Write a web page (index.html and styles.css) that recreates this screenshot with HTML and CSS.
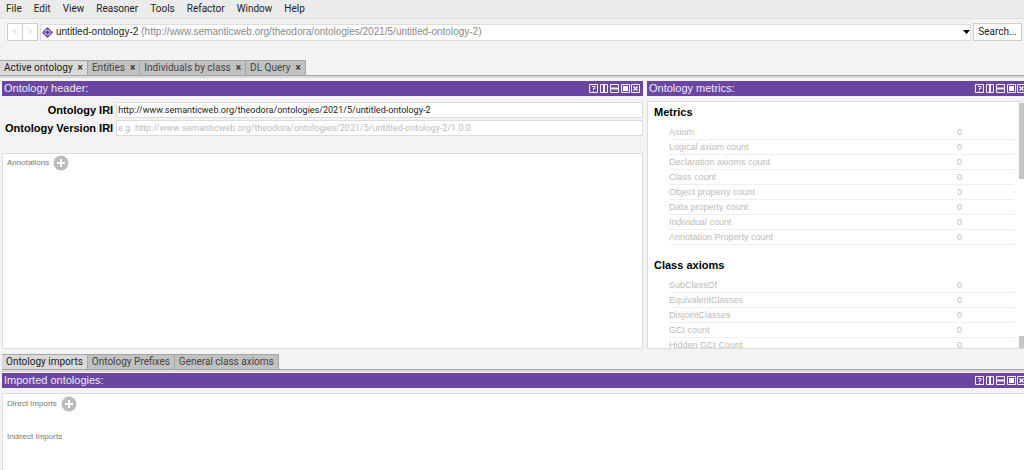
FILE: index.html
```html
<!DOCTYPE html>
<html lang="en">
<head>
<meta charset="utf-8">
<title>untitled-ontology-2</title>
<link rel="stylesheet" href="styles.css">
</head>
<body>
<svg class="defs" aria-hidden="true">
  <symbol id="window-controls" viewBox="0 0 51 9">
    <g fill="none" stroke="#f4effb" stroke-width="1">
      <path d="M.5 .5h8v8h-8zM11.500 .5h7v8h-7zM21.500 .5h8v8h-8zM32.500 .5h8v8h-8zM42.500 .5h8v8h-8z"/>
      <path d="M3 2.500h3v2h-1.500v1.500M4.500 7v1"/>
      <path d="M44.500 2.500l4 4M48.500 2.500l-4 4" stroke-width="1.500"/>
      <path d="M15 1v7M21 4.500h9" stroke-width="2"/>
    </g>
    <path fill="#fff" d="M34 2h5v5h-5z"/>
  </symbol>
  <symbol id="add" viewBox="0 0 16 16">
    <circle cx="8" cy="8" r="7.500" fill="#bcbcbc"/>
    <path d="M8 4v8M4 8h8" stroke="#fff" stroke-width="2"/>
  </symbol>
</svg>

<nav class="menu">
  <button>File</button><button>Edit</button><button>View</button><button>Reasoner</button><button>Tools</button><button>Refactor</button><button>Window</button><button>Help</button>
</nav>

<div class="toolbar">
  <div class="history"><button disabled aria-label="Back">&lt;</button><button disabled aria-label="Forward">&gt;</button></div>
  <button class="ontology-picker" aria-haspopup="listbox">
    <svg class="ontology-icon" viewBox="0 0 11 11"><path d="M5.500 0l5.500 5.500-5.500 5.500-5.500-5.500z" fill="#7150ad"/><circle cx="5.500" cy="5.500" r="3.500" fill="#7150ad"/><circle cx="5.500" cy="5.500" r="2.300" fill="#5b3a94" stroke="#e4daf4" stroke-width="1"/></svg>
    <span class="name">untitled-ontology-2</span>
    <span class="iri">(http://www.semanticweb.org/theodora/ontologies/2021/5/untitled-ontology-2)</span>
    <svg class="arrow" viewBox="0 0 7 4"><path d="M0 0h7l-3.500 4z"/></svg>
  </button>
  <button class="search">Search...</button>
</div>

<div class="tabs main-tabs">
  <button class="tab active">Active ontology<span class="close">×</span></button>
  <button class="tab">Entities<span class="close">×</span></button>
  <button class="tab">Individuals by class<span class="close">×</span></button>
  <button class="tab">DL Query<span class="close">×</span></button>
</div>

<main class="workspace">
  <section class="view">
    <header class="view-header"><h2>Ontology header:</h2><svg class="controls"><use href="#window-controls"/></svg></header>
    <form class="iri-form">
      <label for="iri">Ontology IRI</label>
      <input id="iri" value="http://www.semanticweb.org/theodora/ontologies/2021/5/untitled-ontology-2">
      <label for="version">Ontology Version IRI</label>
      <input id="version" placeholder="e.g. http://www.semanticweb.org/theodora/ontologies/2021/5/untitled-ontology-2/1.0.0">
    </form>
    <div class="box annotations">
      <div class="add-row">Annotations<button class="add" aria-label="Add annotation"><svg><use href="#add"/></svg></button></div>
    </div>
  </section>

  <section class="view metrics-view">
    <header class="view-header edge"><h2>Ontology metrics:</h2><svg class="controls"><use href="#window-controls"/></svg></header>
    <div class="box metrics">
      <div class="metrics-list">
        <h3>Metrics</h3>
        <table>
          <tr><td>Axiom</td><td>0</td></tr>
          <tr><td>Logical axiom count</td><td>0</td></tr>
          <tr><td>Declaration axioms count</td><td>0</td></tr>
          <tr><td>Class count</td><td>0</td></tr>
          <tr><td>Object property count</td><td>0</td></tr>
          <tr><td>Data property count</td><td>0</td></tr>
          <tr><td>Individual count</td><td>0</td></tr>
          <tr><td>Annotation Property count</td><td>0</td></tr>
        </table>
        <h3>Class axioms</h3>
        <table>
          <tr><td>SubClassOf</td><td>0</td></tr>
          <tr><td>EquivalentClasses</td><td>0</td></tr>
          <tr><td>DisjointClasses</td><td>0</td></tr>
          <tr><td>GCI count</td><td>0</td></tr>
          <tr><td>Hidden GCI Count</td><td>0</td></tr>
        </table>
      </div>
      <div class="scrollbar"><div class="thumb"></div><div class="step"></div></div>
    </div>
  </section>
</main>

<section class="lower">
  <div class="tabs">
    <button class="tab active">Ontology imports</button>
    <button class="tab">Ontology Prefixes</button>
    <button class="tab">General class axioms</button>
  </div>
  <header class="view-header edge"><h2>Imported ontologies:</h2><svg class="controls"><use href="#window-controls"/></svg></header>
  <div class="box imports">
    <div class="add-row">Direct Imports<button class="add" aria-label="Add direct import"><svg><use href="#add"/></svg></button></div>
    <div class="add-row">Indirect Imports</div>
  </div>
</section>
</body>
</html>
```

FILE: styles.css
```css
* { box-sizing: border-box; }
body {
  margin: 0;
  height: 100vh;
  display: flex;
  flex-direction: column;
  overflow: hidden;
  background: #f3f3f3;
  color: #222;
  font: 10px/14px Roboto, sans-serif;
}
button, input { font: inherit; color: inherit; margin: 0; padding: 0; border: 0; background: none; }
h2, h3 { margin: 0; font-weight: 400; }
.defs { display: none; }

.menu {
  display: flex;
  gap: 12px;
  padding: 2px 6px;
  background: #ebebeb;
  border-bottom: 1px solid #e0e0e0;
}

.toolbar { display: flex; align-items: center; gap: 2px; padding: 4px 2px 19px 7px; }
.history { display: flex; }
.history button { width: 16px; height: 18px; background: #fff; border: 1px solid #ccc; color: #ddd; }
.history button + button { margin-left: -1px; }
.ontology-picker {
  flex: 1;
  min-width: 0;
  height: 17px;
  display: flex;
  align-items: center;
  gap: 3px;
  padding: 0 0 0 1px;
  background: #fff;
  border: 1px solid #ddd;
  white-space: nowrap;
  font-family: "Liberation Sans", sans-serif;
}
.ontology-icon { width: 11px; height: 11px; }
.iri { color: #888; }
.arrow { width: 7px; height: 4px; margin-left: auto; }
.search { height: 18px; padding: 0 4px; background: #fff; border: 1px solid #ccc; }

.tabs { display: flex; border-bottom: 1px solid #a5a5a5; box-shadow: 0 2px #dadada; }
.tab {
  height: 15px;
  padding: 0 4px;
  background: #c1c1c1;
  border: 1px solid #a5a5a5;
  border-width: 1px 1px 0 0;
  color: #444;
  line-height: 14px;
}
.tab.active { background: #d9d9d9; color: #222; }
.close { margin-left: 5px; font-weight: 700; color: #333; }

.workspace {
  flex: 1;
  min-height: 0;
  display: grid;
  grid-template-columns: 641fr 380fr;
  gap: 4px;
  padding: 5px 0 5px 2px;
  margin-right: -3px;
}
.view { display: flex; flex-direction: column; min-width: 0; min-height: 0; }
.view-header {
  display: flex;
  align-items: center;
  justify-content: space-between;
  height: 15px;
  padding: 0 3px 0 2px;
  background: #6b46a0;
  color: #f0eaf8;
}
.view-header.edge { padding-right: 1px; }
.view-header h2 { font: 11px/15px "Liberation Sans", sans-serif; }
.controls { width: 51px; height: 9px; }
.box { background: #fff; border: 1px solid #dcdcdc; }

.iri-form {
  display: grid;
  grid-template-columns: auto 1fr;
  gap: 2px 3px;
  padding: 6px 0 17px 3px;
}
.iri-form label { font: bold 11px/16px "Liberation Sans", sans-serif; text-align: right; color: #000; }
.iri-form input {
  min-width: 0;
  height: 16px;
  padding: 0 1px;
  background: #fff;
  border: 1px solid #dcdcdc;
  font-size: 9px;
}
.iri-form input::placeholder { color: #bbb; opacity: 1; }
.annotations { flex: 1; padding: 1px 4px; }
.add-row { display: flex; align-items: center; gap: 4px; height: 16px; font: 8px/16px "Liberation Sans", sans-serif; color: #777; }
.add { width: 16px; height: 16px; }
.add svg { display: block; width: 16px; height: 16px; }

.metrics { flex: 1; min-height: 0; display: flex; margin-top: 5px; overflow: hidden; }
.metrics-list { flex: 1; min-width: 0; padding: 2px 5px 0 6px; }
.metrics-list h3 { font: bold 11px/16px "Liberation Sans", sans-serif; color: #000; padding-bottom: 5px; }
.metrics-list table {
  width: calc(100% - 15px);
  margin: 0 0 12px 15px;
  border-spacing: 0;
  font: 9px/14px "Liberation Sans", sans-serif;
  color: #bbb;
}
.metrics-list td { padding: 0; border-bottom: 1px solid #efefef; }
.metrics-list td:last-child { width: 57px; }
.scrollbar { width: 7px; padding: 1px 0 0; display: flex; flex-direction: column; justify-content: space-between; }
.thumb { height: 76px; background: #c4c4c4; }
.step { height: 12px; background: #c4c4c4; }

.lower { flex: 0 0 116px; display: flex; flex-direction: column; padding-left: 2px; margin-right: -3px; }
.lower .view-header { margin: 3px 0 5px; }
.imports { flex: 1; padding: 2px 4px; border-bottom: 0; display: flex; flex-direction: column; gap: 17px; }
```
